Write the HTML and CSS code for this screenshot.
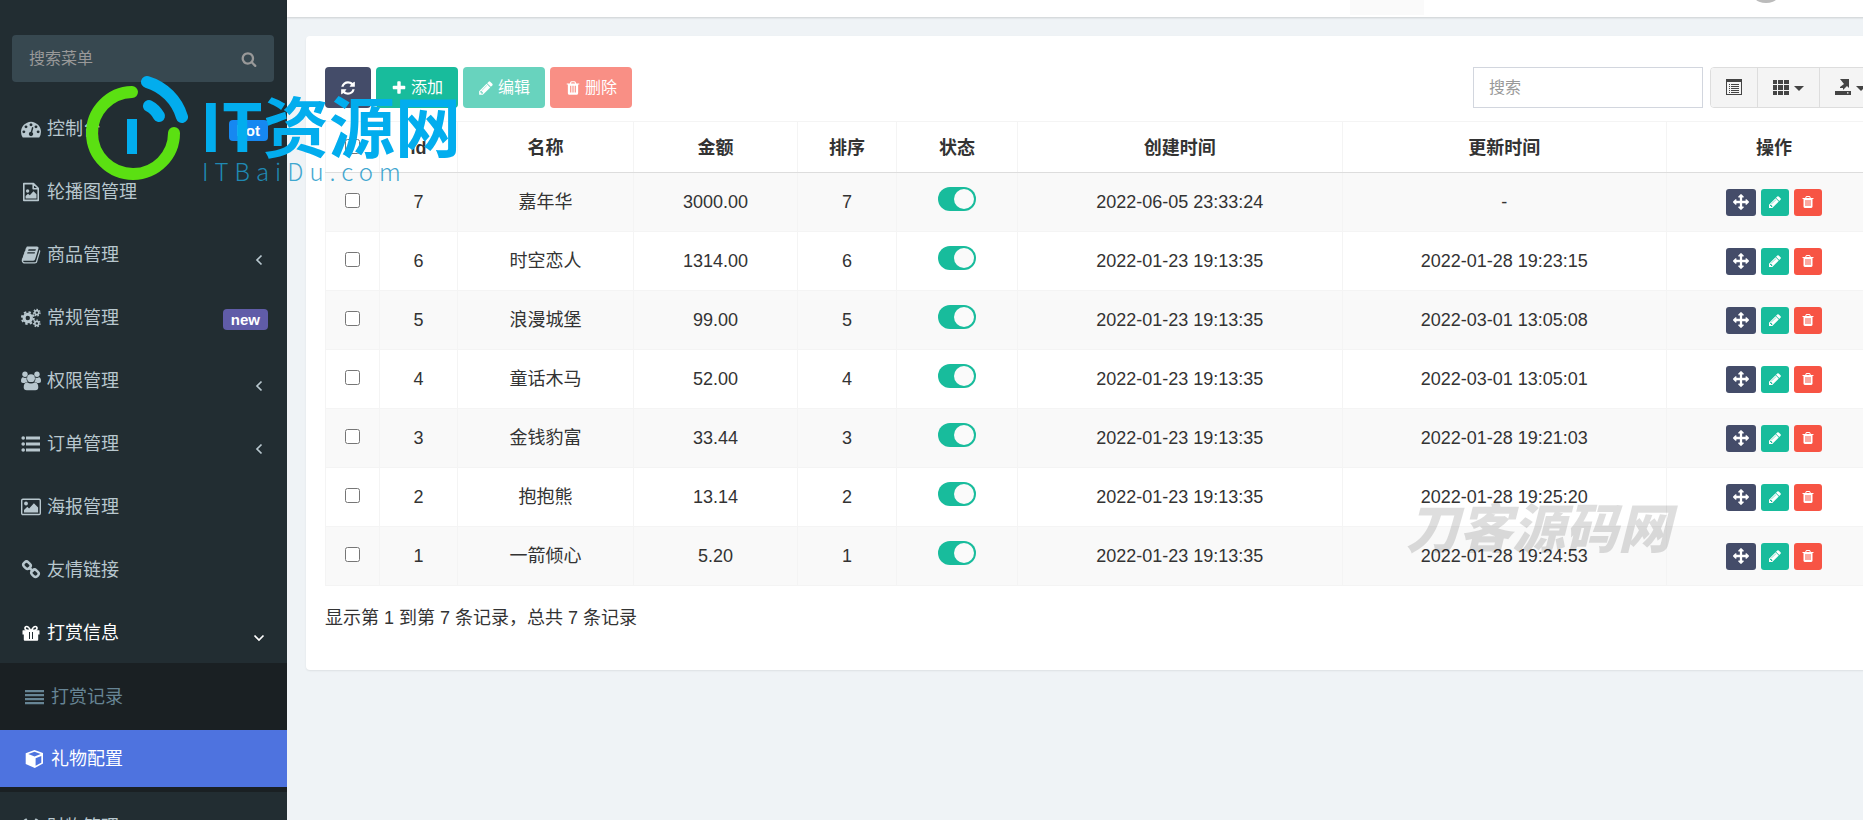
FILE: index.html
```
<!DOCTYPE html>
<html lang="zh-CN">
<head>
<meta charset="utf-8">
<title>礼物配置</title>
<link rel="stylesheet" href="styles.css">
</head>
<body>
<svg class="sprite" aria-hidden="true">
  <symbol id="refresh" viewBox="0 0 1792 1792"><path d="M1639 1056q0 5-1 7-64 268-268 434.5t-478 166.5q-146 0-282.5-55t-243.5-157l-129 129q-19 19-45 19t-45-19-19-45v-448q0-26 19-45t45-19h448q26 0 45 19t19 45-19 45l-137 137q71 66 161 102t187 36q134 0 250-65t186-179q11-17 53-117 8-23 30-23h192q13 0 22.5 9.5t9.5 22.5zm25-800v448q0 26-19 45t-45 19h-448q-26 0-45-19t-19-45 19-45l138-138q-148-137-349-137-134 0-250 65t-186 179q-11 17-53 117-8 23-30 23h-199q-13 0-22.5-9.5t-9.5-22.5v-7q65-268 270-434.5t480-166.5q146 0 284 55.5t245 156.5l130-129q19-19 45-19t45 19 19 45z"/></symbol>
  <symbol id="plus" viewBox="0 0 1792 1792"><path d="M1600 736v192q0 40-28 68t-68 28h-416v416q0 40-28 68t-68 28h-192q-40 0-68-28t-28-68v-416h-416q-40 0-68-28t-28-68v-192q0-40 28-68t68-28h416v-416q0-40 28-68t68-28h192q40 0 68 28t28 68v416h416q40 0 68 28t28 68z"/></symbol>
  <symbol id="pencil" viewBox="0 0 1792 1792"><path d="M491 1536l91-91-235-235-91 91v107h128v128h107zm523-928q0-22-22-22-10 0-17 7l-542 542q-7 7-7 17 0 22 22 22 10 0 17-7l542-542q7-7 7-17zm-54-192l416 416-832 832h-416v-416zm683 96q0 53-37 90l-166 166-416-416 166-165q36-38 90-38 53 0 91 38l235 234q37 39 37 91z"/></symbol>
  <symbol id="trash" viewBox="0 0 1792 1792"><path d="M704 1376v-704q0-14-9-23t-23-9h-64q-14 0-23 9t-9 23v704q0 14 9 23t23 9h64q14 0 23-9t9-23zm256 0v-704q0-14-9-23t-23-9h-64q-14 0-23 9t-9 23v704q0 14 9 23t23 9h64q14 0 23-9t9-23zm256 0v-704q0-14-9-23t-23-9h-64q-14 0-23 9t-9 23v704q0 14 9 23t23 9h64q14 0 23-9t9-23zm-544-992h448l-48-117q-7-9-17-11h-317q-10 2-17 11zm928 32v64q0 14-9 23t-23 9h-96v948q0 83-47 143.5t-113 60.5h-832q-66 0-113-58.5t-47-141.5v-952h-96q-14 0-23-9t-9-23v-64q0-14 9-23t23-9h309l70-167q15-37 54-63t79-26h320q40 0 79 26t54 63l70 167h309q14 0 23 9t9 23z"/></symbol>
  <symbol id="move" viewBox="0 0 1792 1792"><path d="M1792 896q0 26-19 45l-256 256q-19 19-45 19t-45-19-19-45v-128h-384v384h128q26 0 45 19t19 45-19 45l-256 256q-19 19-45 19t-45-19l-256-256q-19-19-19-45t19-45 45-19h128v-384h-384v128q0 26-19 45t-45 19-45-19l-256-256q-19-19-19-45t19-45l256-256q19-19 45-19t45 19 19 45v128h384v-384h-128q-26 0-45-19t-19-45 19-45l256-256q19-19 45-19t45 19l256 256q19 19 19 45t-19 45-45 19h-128v384h384v-128q0-26 19-45t45-19 45 19l256 256q19 19 19 45z"/></symbol>
  <symbol id="search" viewBox="0 0 1792 1792"><path d="M1216 832q0-185-131.5-316.5t-316.5-131.5-316.5 131.5-131.5 316.5 131.5 316.5 316.5 131.5 316.5-131.5 131.5-316.5zm512 832q0 52-38 90t-90 38q-54 0-90-38l-343-342q-179 124-399 124-143 0-273.5-55.5t-225-150-150-225-55.5-273.5 55.5-273.5 150-225 225-150 273.5-55.5 273.5 55.5 225 150 150 225 55.5 273.5q0 220-124 399l343 343q37 37 37 90z"/></symbol>
  <symbol id="dashboard" viewBox="0 0 1792 1792"><path d="M384 1152q0-53-37.5-90.5t-90.5-37.5-90.5 37.5-37.5 90.5 37.5 90.5 90.5 37.5 90.5-37.5 37.5-90.5zm192-448q0-53-37.5-90.5t-90.5-37.5-90.5 37.5-37.5 90.5 37.5 90.5 90.5 37.5 90.5-37.5 37.5-90.5zm428 481l101-382q6-26-7.5-48.5t-38.5-29.5-48 6.5-30 39.5l-101 382q-60 5-107 43.5t-63 98.5q-20 77 20 146t117 89 146-20 89-117q16-60-6-117t-72-91zm660-33q0-53-37.5-90.5t-90.5-37.5-90.5 37.5-37.5 90.5 37.5 90.5 90.5 37.5 90.5-37.5 37.5-90.5zm-640-640q0-53-37.5-90.5t-90.5-37.5-90.5 37.5-37.5 90.5 37.5 90.5 90.5 37.5 90.5-37.5 37.5-90.5zm448 192q0-53-37.5-90.5t-90.5-37.5-90.5 37.5-37.5 90.5 37.5 90.5 90.5 37.5 90.5-37.5 37.5-90.5zm320 448q0 261-141 483-19 29-54 29h-1402q-35 0-54-29-141-221-141-483 0-182 71-348t191-286 286-191 348-71 348 71 286 191 191 286 71 348z"/></symbol>
  <symbol id="book" viewBox="0 0 1792 1792"><path d="M1703 478q40 57 18 129l-275 906q-19 64-76.5 107.5t-122.5 43.5h-923q-77 0-148.5-53.5t-99.5-131.5q-24-67-2-127 0-4 3-27t4-37q1-8-3-21.5t-3-19.5q2-11 8-21t16.5-23.5 16.5-23.5q23-38 45-91.5t30-91.5q3-10 .5-30t-.5-28q3-11 17-28t17-23q21-36 42-92t25-90q1-9-2.500-32t.5-28q4-13 22-30.500t22-22.500q19-26 42.500-84.500t27.500-96.500q1-8-3-25.500t-2-26.500q2-8 9-18t18-23 17-21q8-12 16.500-30.500t15-35 16-36 19.500-32 26.500-23.500 36-11.500 47.500 5.500l-1 3q38-9 51-9h761q74 0 114 56t18 130l-274 906q-36 119-71.500 153.500t-128.500 34.500h-869q-27 0-38 15-11 16-1 43 24 70 144 70h923q29 0 56-15.500t35-41.500l300-987q7-22 5-57 38 15 59 43zm-1064 2q-4 13 2 22.500t20 9.500h608q13 0 25.500-9.500t16.500-22.500l21-64q4-13-2-22.500t-20-9.500h-608q-13 0-25.500 9.500t-16.500 22.500zm-83 256q-4 13 2 22.500t20 9.500h608q13 0 25.500-9.500t16.500-22.500l21-64q4-13-2-22.500t-20-9.500h-608q-13 0-25.500 9.500t-16.500 22.500z"/></symbol>
  <symbol id="file-image" viewBox="0 0 20 20"><path fill="none" stroke="currentColor" stroke-width="1.6" stroke-linejoin="round" d="M2.800 1.600h9.700l4.700 4.700v12.100H2.800zM12.200 1.800v4.900h4.800"/><circle cx="6.600" cy="9" r="1.700"/><path d="M4.600 16.400v-2.500l2.400-2.200 1.800 1.500 3.700-3.900 3 3v4.100z"/></symbol>
  <symbol id="cogs" viewBox="0 0 20 20"><g fill="none" stroke="currentColor"><circle cx="6.800" cy="10" r="3.700" stroke-width="3"/><circle cx="6.800" cy="10" r="5.900" stroke-width="2" stroke-dasharray="2.400 2.234"/><circle cx="15.800" cy="4.600" r="2" stroke-width="1.600"/><circle cx="15.800" cy="4.600" r="3.300" stroke-width="1.200" stroke-dasharray="1.500 1.462"/><circle cx="15.800" cy="15.400" r="2" stroke-width="1.600"/><circle cx="15.800" cy="15.400" r="3.300" stroke-width="1.200" stroke-dasharray="1.500 1.462"/></g></symbol>
  <symbol id="group" viewBox="0 0 20 20"><circle cx="4" cy="3.300" r="2.700"/><circle cx="16" cy="3.300" r="2.700"/><path d="M2 6.300q2 1.200 3.600.2-.5 2.700 1 4.500-1.600.1-2.900 1H2Q0 12 0 10.300q0-3.700 2-4zM18 6.300q-2 1.200-3.600.2.5 2.700-1 4.500 1.600.1 2.900 1H18q2 0 2-1.700 0-3.700-2-4z"/><circle cx="10" cy="7.200" r="3.900"/><path d="M6 11.200q4 2.600 8 0 3.300.5 3.300 5 0 3-3 3H5.700q-3 0-3-3 0-4.500 3.300-5z"/></symbol>
  <symbol id="list" viewBox="0 0 20 20"><circle cx="2.200" cy="4" r="1.800"/><circle cx="2.200" cy="10" r="1.800"/><circle cx="2.200" cy="16" r="1.800"/><path d="M5 2.500h14v3H5zM5 8.500h14v3H5zM5 14.500h14v3H5z"/></symbol>
  <symbol id="picture" viewBox="0 0 20 20"><rect x=".7" y="2.200" width="18.600" height="15.300" rx="1.200" fill="none" stroke="currentColor" stroke-width="1.400"/><circle cx="5" cy="6.500" r="1.900"/><path d="M3 15.500v-2.600l3.300-3.200 1.800 1.800 4.800-5.300 4.200 4.200v5.100z"/></symbol>
  <symbol id="link" viewBox="0 0 20 20"><g fill="none" stroke="currentColor" stroke-width="2.500"><rect x="2.300" y="2.200" width="7.400" height="6" rx="2.600" transform="rotate(45 6 5.200)"/><rect x="10.300" y="10.200" width="7.400" height="6" rx="2.600" transform="rotate(45 14 13.200)"/><path d="M7.500 7l5 4.600"/></g></symbol>
  <symbol id="gift" viewBox="0 0 20 20"><path d="M2 7.300h16q.5 0 .5.500v3.700h-1.300v5.200q0 1-1 1H3.800q-1 0-1-1v-5.200H1.500V7.800q0-.5.500-.5z"/><path fill="none" stroke="currentColor" stroke-width="1.700" d="M9.600 7.300Q7.500 3.500 5.700 3.500 4 3.500 4 5.200t2 2.100zM10.400 7.300Q12.500 3.500 14.300 3.500 16 3.500 16 5.200t-2 2.100z"/><path fill="#222d32" d="M8 9h1v7H8zM11 9h1v7h-1z"/></symbol>
  <symbol id="justify" viewBox="0 0 20 20"><path d="M0 3h19v2.200H0zM0 7h19v2.200H0zM0 11h19v2.200H0zM0 15h19v2.200H0z"/></symbol>
  <symbol id="cube" viewBox="0 0 20 20"><path fill-rule="evenodd" d="M9.500 1l8.500 3v10.500L9.800 19 .7 15V4.200zM9.500 2.800L3.300 5l6.300 2.400L15.700 5zM10.600 9.200v7.500l5.700-3V6.900z"/></symbol>
  <symbol id="money" viewBox="0 0 20 20"><path fill="none" stroke="currentColor" stroke-width="3" d="M4 2l6 9 6-9M10 10v9M4 11h12M4 15h12"/></symbol>
  <symbol id="chevron" viewBox="0 0 12 12"><path fill="none" stroke="currentColor" stroke-width="1.700" d="M8.500 1.500L4 6l4.500 4.500"/></symbol>
  <symbol id="list-alt" viewBox="0 0 16 16"><path fill-rule="evenodd" d="M0 0h16v16H0zM1 3v12h14V3z"/><path d="M3 5h1v1H3zM5 5h8v1H5zM3 7h1v1H3zM5 7h8v1H5zM3 9h1v1H3zM5 9h8v1H5zM3 11h1v1H3zM5 11h8v1H5zM3 13h1v1H3zM5 13h8v1H5z"/></symbol>
  <symbol id="th" viewBox="0 0 16 16"><path d="M0 1h4v4H0zM5 1h5v4H5zM11 1h5v4h-5zM0 6h4v5H0zM5 6h5v5H5zM11 6h5v5h-5zM0 12h4v4H0zM5 12h5v4H5zM11 12h5v4h-5z"/></symbol>
  <symbol id="export" viewBox="0 0 16 16"><path fill-rule="evenodd" d="M5 0h9v9l-2-2-4 4v-2H5V8l4-3zM0 12h16v4H0zM12 13.300v1.200h1.500v-1.200z"/></symbol>
</svg>

<div class="app">
  <aside class="sidebar">
    <form class="menu-search">
      <input type="text" placeholder="搜索菜单" aria-label="搜索菜单">
      <button type="button" aria-label="搜索"><svg class="ico ico-sm"><use href="#search"/></svg></button>
    </form>
    <nav class="menu">
      <a href="#"><svg class="ico"><use href="#dashboard"/></svg><span>控制台</span><b class="tag tag-hot">hot</b></a>
      <a href="#"><svg class="ico"><use href="#file-image"/></svg><span>轮播图管理</span></a>
      <a href="#"><svg class="ico"><use href="#book"/></svg><span>商品管理</span><svg class="arrow"><use href="#chevron"/></svg></a>
      <a href="#"><svg class="ico"><use href="#cogs"/></svg><span>常规管理</span><b class="tag tag-new">new</b></a>
      <a href="#"><svg class="ico"><use href="#group"/></svg><span>权限管理</span><svg class="arrow"><use href="#chevron"/></svg></a>
      <a href="#"><svg class="ico"><use href="#list"/></svg><span>订单管理</span><svg class="arrow"><use href="#chevron"/></svg></a>
      <a href="#"><svg class="ico"><use href="#picture"/></svg><span>海报管理</span></a>
      <a href="#"><svg class="ico"><use href="#link"/></svg><span>友情链接</span></a>
      <a href="#" class="open"><svg class="ico"><use href="#gift"/></svg><span>打赏信息</span><svg class="arrow"><use href="#chevron"/></svg></a>
      <div class="submenu">
        <a href="#"><svg class="ico"><use href="#justify"/></svg><span>打赏记录</span></a>
        <a href="#" class="active"><svg class="ico"><use href="#cube"/></svg><span>礼物配置</span></a>
      </div>
      <a href="#"><svg class="ico"><use href="#money"/></svg><span>财物管理</span></a>
    </nav>
  </aside>

  <div class="page">
    <header class="topbar"><span class="topbar-item"></span><span class="avatar"></span></header>
    <main class="panel">
      <div class="toolbar">
        <button type="button" class="btn btn-dark" aria-label="刷新"><svg class="ico ico-sm"><use href="#refresh"/></svg></button>
        <button type="button" class="btn btn-green"><svg class="ico ico-sm"><use href="#plus"/></svg>添加</button>
        <button type="button" class="btn btn-green" disabled><svg class="ico ico-sm"><use href="#pencil"/></svg>编辑</button>
        <button type="button" class="btn btn-red" disabled><svg class="ico ico-sm"><use href="#trash"/></svg>删除</button>
        <input class="table-search" type="text" placeholder="搜索" aria-label="搜索">
        <div class="group">
          <button type="button" aria-label="切换"><svg class="ico ico-sm"><use href="#list-alt"/></svg></button>
          <button type="button" aria-label="列"><svg class="ico ico-sm"><use href="#th"/></svg><i class="caret"></i></button>
          <button type="button" aria-label="导出数据"><svg class="ico ico-sm"><use href="#export"/></svg><i class="caret"></i></button>
        </div>
      </div>
      <table class="grid">
        <colgroup><col class="c-check"><col class="c-id"><col class="c-name"><col class="c-price"><col class="c-sort"><col class="c-state"><col><col><col class="c-ops"></colgroup>
        <thead><tr><th><input type="checkbox" aria-label="全选"></th><th>Id</th><th>名称</th><th>金额</th><th>排序</th><th>状态</th><th>创建时间</th><th>更新时间</th><th>操作</th></tr></thead>
        <tbody id="rows"></tbody>
      </table>
      <p class="summary">显示第 1 到第 7 条记录，总共 7 条记录</p>
    </main>
  </div>
</div>

<div class="brand">
  <svg class="brand-mark" viewBox="0 0 104 108">
    <g fill="none" stroke-linecap="round" stroke-width="12">
      <path stroke="#5be012" d="M48 18A41 41 0 1 0 90 59"/>
      <path stroke="#02adee" d="M63 8A52 52 0 0 1 98 43"/>
      <path stroke="#02adee" d="M65 32Q71 35 75 42"/>
    </g>
    <path fill="#02adee" d="M43 45h10v35H43z"/>
  </svg>
  <div class="brand-text"><strong>IT资源网</strong><span>ITBaiDu.com</span></div>
</div>
<div class="stamp">刀客源码网</div>
<script src="rows.js"></script>
</body>
</html>
```
FILE: rows.js
```
const gifts = [
  [7, '嘉年华', '3000.00', '2022-06-05 23:33:24', '-'],
  [6, '时空恋人', '1314.00', '2022-01-23 19:13:35', '2022-01-28 19:23:15'],
  [5, '浪漫城堡', '99.00', '2022-01-23 19:13:35', '2022-03-01 13:05:08'],
  [4, '童话木马', '52.00', '2022-01-23 19:13:35', '2022-03-01 13:05:01'],
  [3, '金钱豹富', '33.44', '2022-01-23 19:13:35', '2022-01-28 19:21:03'],
  [2, '抱抱熊', '13.14', '2022-01-23 19:13:35', '2022-01-28 19:25:20'],
  [1, '一箭倾心', '5.20', '2022-01-23 19:13:35', '2022-01-28 19:24:53']
];
const op = (cls, icon, label) =>
  `<button type="button" class="op ${cls}" aria-label="${label}"><svg><use href="#${icon}"/></svg></button>`;
document.getElementById('rows').innerHTML = gifts.map(([id, name, price, created, updated]) => `
  <tr${id === 5 ? ' class="hovered"' : ''}>
    <td><input type="checkbox" aria-label="选择 ${id}"></td>
    <td>${id}</td><td>${name}</td><td>${price}</td><td>${id}</td>
    <td><input type="checkbox" class="switch" checked aria-label="状态 ${id}"></td>
    <td>${created}</td><td>${updated}</td>
    <td><div class="ops">${op('op-move', 'move', '拖动')}${op('op-edit', 'pencil', '编辑')}${op('op-del', 'trash', '删除')}</div></td>
  </tr>`).join('');
```
FILE: styles.css
```
* { box-sizing: border-box; }
body {
  margin: 0;
  height: 100vh;
  overflow: hidden;
  position: relative;
  background: #eff3f6;
  color: #333;
  font: 18px/24px "Liberation Sans", "Noto Sans CJK SC", sans-serif;
}
button, input { font: inherit; margin: 0; }
button { cursor: pointer; }
a { color: inherit; text-decoration: none; }
.sprite { display: none; }
.ico { width: 20px; height: 20px; fill: currentColor; flex: none; }
.ico-sm { width: 16px; height: 16px; }

.app { display: flex; height: 100vh; }
.sidebar { width: 287px; flex: none; background: #222d32; color: #b8c7ce; overflow: hidden; }
.menu-search {
  display: flex;
  align-items: center;
  height: 47px;
  margin: 35px 13px 14px 12px;
  padding: 0 17px;
  border-radius: 4px;
  background: #374850;
  color: #999;
}
.menu-search input { flex: 1; min-width: 0; border: 0; padding: 0; background: none; font-size: 16px; color: inherit; }
.menu-search input::placeholder { color: #999; }
.menu-search button { display: flex; border: 0; padding: 0; background: none; color: inherit; }

.menu > a { display: flex; align-items: center; gap: 6px; height: 63px; padding: 2px 19px 0 21px; }
.menu .open { color: #fff; }
.tag { margin: 4px 0 0 auto; padding: 0 8px; border-radius: 4px; color: #fff; font-size: 15px; line-height: 21px; }
.tag-hot { background: #1688f1; }
.tag-new { background: #605ca8; }
.arrow { width: 12px; height: 12px; margin: 10px 3px 0 auto; }
.open .arrow { transform: rotate(-90deg); }
.submenu { display: flex; flex-direction: column; gap: 5px; padding: 5px 0; background: #1a2023; color: #678595; }
.submenu a { display: flex; align-items: center; gap: 6px; height: 57px; padding-left: 25px; }
.submenu .active { background: #4e73df; color: #fff; }
.menu > a:last-child { padding-top: 6px; }

/* The work area is wider than the window and runs past its right edge. */
.page { flex: 1; min-width: 0; margin-right: -57px; }
.topbar {
  display: flex;
  justify-content: flex-end;
  gap: 324px;
  height: 17px;
  padding-right: 136px;
  background: #fff;
  box-shadow: 0 1px 2px rgba(0, 0, 0, .15);
}
.topbar-item { width: 74px; height: 15px; background: #fafafa; }
.avatar { width: 36px; height: 36px; margin-top: -33px; border-radius: 50%; background: #bbb; }

.panel { margin: 19px; padding: 31px 19px 40px; border-radius: 4px; background: #fff; box-shadow: 0 1px 2px rgba(0, 0, 0, .08); }
.toolbar { display: flex; gap: 5px; height: 41px; margin-bottom: 13px; }
.btn { display: flex; align-items: center; gap: 4px; padding: 0 15px; border: 0; border-radius: 4px; color: #fff; font-size: 16px; }
.btn:disabled { opacity: .65; }
.btn-dark { background: #444c69; }
.btn-green { background: #18bc9c; }
.btn-red { background: #f75444; }
.table-search { width: 230px; margin: 0 2px 0 auto; padding: 0 15px; border: 1px solid #d2d6de; background: #fff; font-size: 16px; }
.table-search::placeholder { color: #999; }
.group { display: flex; border: 1px solid #ddd; border-radius: 4px; overflow: hidden; }
.group button { display: flex; align-items: center; gap: 5px; padding: 0 15px 2px; border: 0; border-right: 1px solid #ddd; background: #f4f4f4; color: #444; }
.group button:last-child { border-right: 0; }
.caret { margin-top: 4px; border: 5px solid transparent; border-top-color: currentColor; border-bottom: 0; }

.grid { width: 100%; table-layout: fixed; border-collapse: collapse; text-align: center; }
.c-check { width: 54px; }
.c-id { width: 78px; }
.c-name { width: 176px; }
.c-price { width: 164px; }
.c-sort { width: 99px; }
.c-state { width: 121px; }
.c-ops { width: 215px; }
.grid th, .grid td { padding: 0; border: 1px solid #f4f4f4; }
.grid th { height: 51px; padding-top: 2px; border-bottom-color: #ddd; }
.grid td { height: 59px; }
.grid tbody tr:nth-child(odd) { background: #f9f9f9; }
.grid tbody .hovered { background: #f4f4f4; }
.grid input { width: 15px; height: 15px; vertical-align: middle; margin-bottom: 6px; }
.grid .switch {
  appearance: none;
  width: 38px;
  height: 24px;
  padding: 2px;
  border-radius: 12px;
  background: #18bc9c;
}
.switch::before { content: ""; display: block; width: 20px; height: 20px; margin-left: auto; border-radius: 50%; background: #fafafa; }
.ops { display: flex; justify-content: center; gap: 5px; }
.op { display: flex; align-items: center; height: 27px; padding: 0 7px; border: 0; border-radius: 3px; color: #fff; }
.op svg { width: 14px; height: 14px; fill: currentColor; }
.op-move { background: #444c69; }
.op-move svg { width: 16px; height: 16px; }
.op-edit { background: #18bc9c; }
.op-del { background: #f75444; }
.summary { margin: 20px 0 0; }

.brand { position: absolute; left: 84px; top: 74px; display: flex; gap: 12px; pointer-events: none; }
.brand-mark { width: 104px; height: 108px; }
.brand-text { display: flex; flex-direction: column; padding-top: 15px; color: #02adee; font-family: "Noto Sans CJK SC", sans-serif; }
.brand-text strong { font-size: 66px; line-height: 68px; font-weight: 700; }
.brand-text span { padding-left: 2px; font-size: 24px; line-height: 28px; font-weight: 300; letter-spacing: 6px; color: #1f9aca; opacity: .85; }
.stamp {
  position: absolute;
  left: 1406px;
  top: 495px;
  color: rgba(0, 0, 0, .13);
  font: italic 900 53px/60px "Noto Sans CJK SC", sans-serif;
  pointer-events: none;
}
```
